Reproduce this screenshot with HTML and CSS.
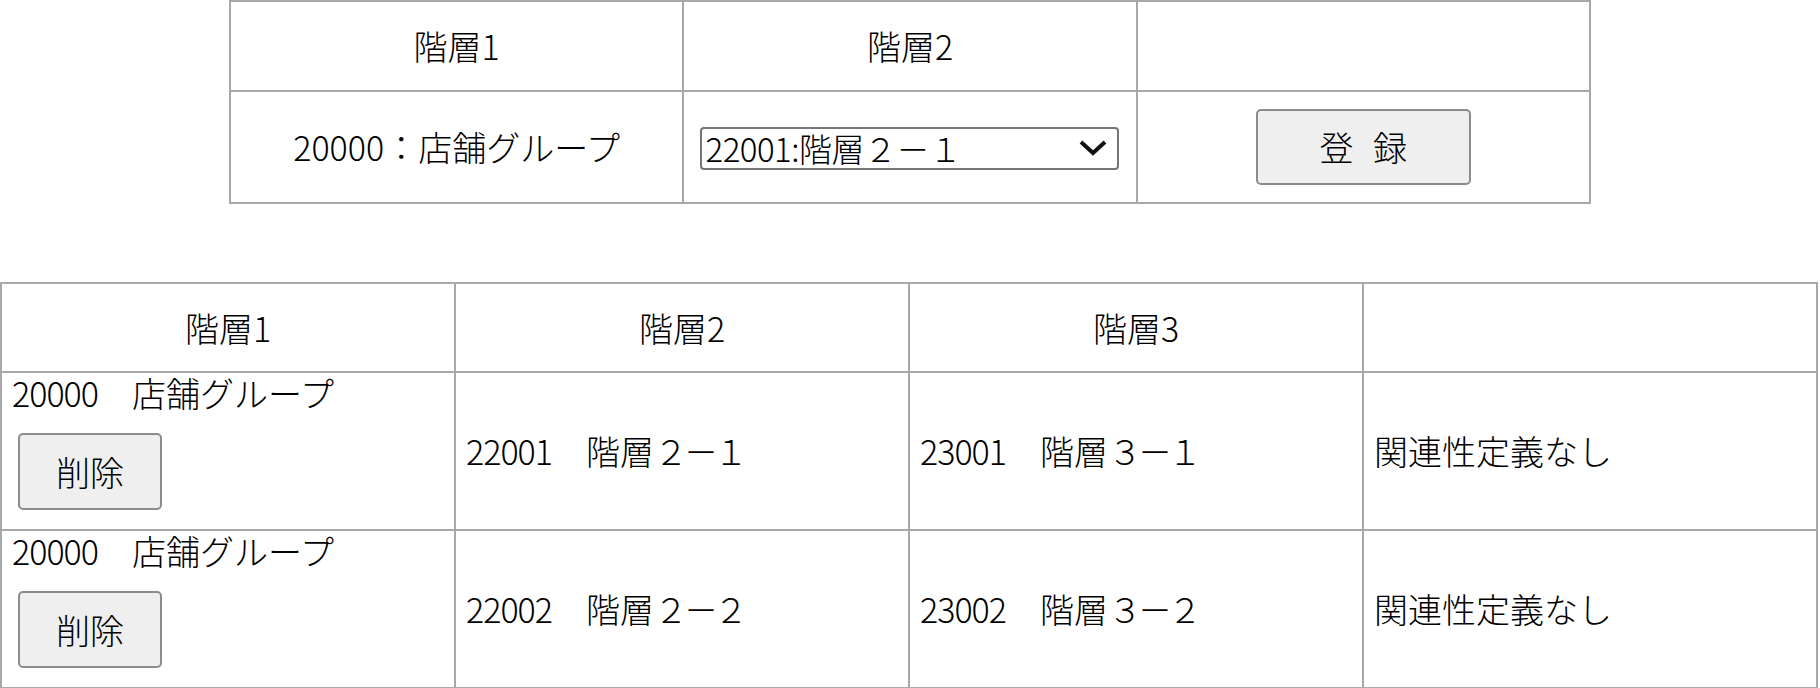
FILE: index.html
```html
<!DOCTYPE html>
<html lang="ja">
<head>
<meta charset="utf-8">
<title>階層関連性</title>
<link rel="stylesheet" href="styles.css">
</head>
<body>
<table class="reg">
  <thead>
    <tr><th>階層1</th><th>階層2</th><th></th></tr>
  </thead>
  <tbody>
    <tr>
      <td>20000：店舗グループ</td>
      <td>
        <div class="sel-wrap">
          <select class="sel"><option>22001:階層２－１</option></select>
          <svg class="chev" viewBox="0 0 28 16" aria-hidden="true"><polyline points="2,2 14,13 26,2" fill="none" stroke="#111" stroke-width="4"/></svg>
        </div>
      </td>
      <td><button class="btn btn-reg">登 録</button></td>
    </tr>
  </tbody>
</table>

<table class="list">
  <thead>
    <tr><th>階層1</th><th>階層2</th><th>階層3</th><th></th></tr>
  </thead>
  <tbody>
    <tr>
      <td class="first">
        <div class="line"><span class="num">20000</span>　店舗グループ</div>
        <button class="btn btn-del">削除</button>
      </td>
      <td><span class="num">22001</span>　階層<span class="fw">２－１</span></td>
      <td><span class="num">23001</span>　階層<span class="fw">３－１</span></td>
      <td>関連性定義なし</td>
    </tr>
    <tr>
      <td class="first">
        <div class="line"><span class="num">20000</span>　店舗グループ</div>
        <button class="btn btn-del">削除</button>
      </td>
      <td><span class="num">22002</span>　階層<span class="fw">２－２</span></td>
      <td><span class="num">23002</span>　階層<span class="fw">３－２</span></td>
      <td>関連性定義なし</td>
    </tr>
  </tbody>
</table>
</body>
</html>
```

FILE: styles.css
```css
html, body {
  margin: 0;
  padding: 0;
  background: #fff;
}

body {
  font-family: "Noto Sans CJK JP", "Noto Sans", sans-serif;
  font-size: 34px;
  font-weight: 300;
  color: #000;
}

table {
  border-collapse: collapse;
  table-layout: fixed;
}

th, td {
  border: 2px solid #a8a8a8;
  padding: 0 10px;
  font-weight: inherit;
  line-height: 40px;
}

.reg {
  width: 1362px;
  margin: 0 auto;
}

.reg th {
  height: 88px;
  text-align: center;
  vertical-align: middle;
}

.reg td {
  height: 110px;
  text-align: center;
  vertical-align: middle;
}

.list {
  width: 1818px;
  margin-top: 78px;
}

.list th {
  height: 87px;
  text-align: center;
  vertical-align: middle;
}

.list td {
  text-align: left;
  vertical-align: middle;
}

.list td.first {
  vertical-align: top;
}

.line {
  line-height: 40px;
}

.num {
  letter-spacing: -1px;
}

.fw {
  letter-spacing: -4px;
}

.btn {
  font-family: inherit;
  font-weight: inherit;
  font-size: 34px;
  color: #000;
  background: #efefef;
  border: 2px solid #8c8c8c;
  border-radius: 5px;
  padding: 0;
  line-height: 1;
}

.btn-del {
  display: block;
  width: 144px;
  height: 77px;
  margin: 20px 0 19px 6px;
}

.btn-reg {
  width: 215px;
  height: 76px;
  word-spacing: 12px;
  vertical-align: middle;
}

.sel-wrap {
  position: relative;
  display: inline-block;
  vertical-align: middle;
}

.sel {
  appearance: none;
  -webkit-appearance: none;
  display: block;
  width: 419px;
  height: 43px;
  font-family: inherit;
  font-weight: inherit;
  font-size: 33px;
  line-height: 1;
  letter-spacing: -0.5px;
  color: #000;
  background: #fff;
  border: 2px solid #767676;
  border-radius: 4px;
  padding: 0 0 0 3px;
  margin: 0;
}

.chev {
  position: absolute;
  right: 12px;
  top: 13px;
  width: 28px;
  height: 16px;
  pointer-events: none;
}
```
